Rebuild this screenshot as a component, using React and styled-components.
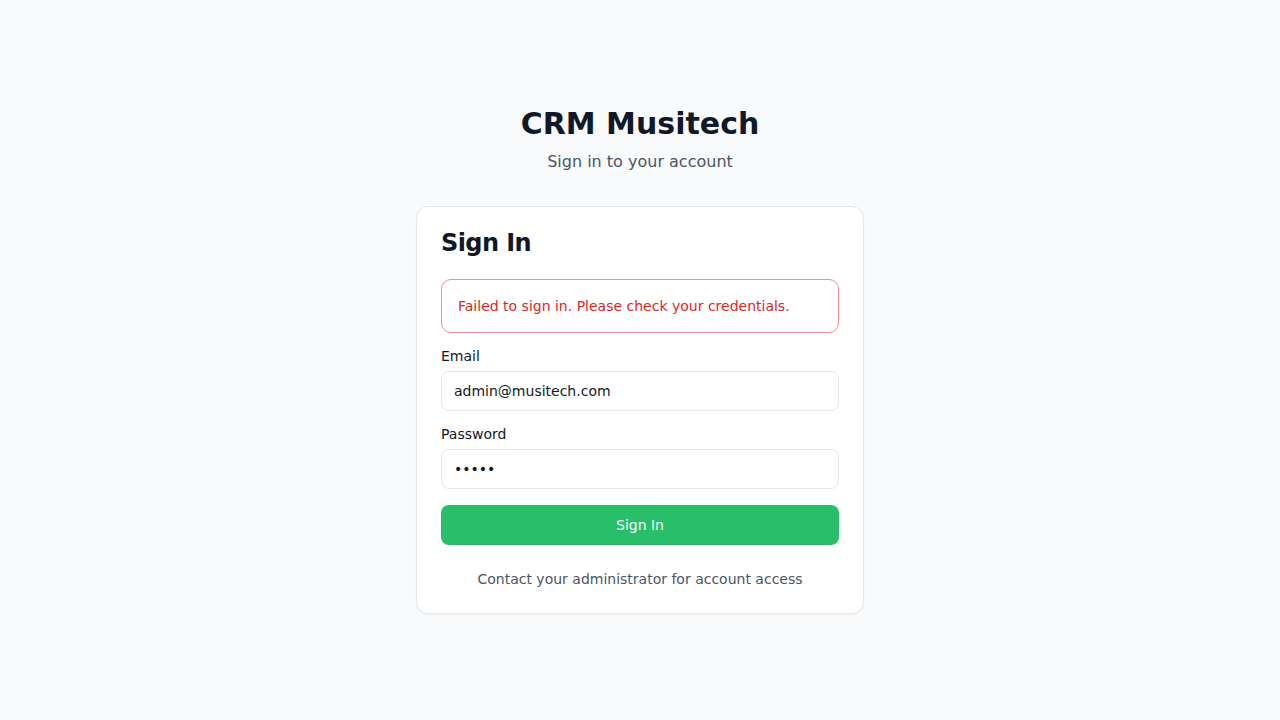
import styled, { createGlobalStyle } from "styled-components";

const GlobalStyle = createGlobalStyle`
  * {
    box-sizing: border-box;
  }
  body {
    margin: 0;
    background-color: #f9fafb;
    font-family: "DejaVu Sans", sans-serif;
    color: #111827;
  }
`;

const App = () => {
  return (
    <>
      <GlobalStyle />
      <Page>
        <Wrapper>
          <Header>
            <Title>CRM Musitech</Title>
            <Subtitle>Sign in to your account</Subtitle>
          </Header>
          <Card>
            <CardTitle>Sign In</CardTitle>
            <Form onSubmit={(e) => e.preventDefault()}>
              <ErrorBox>Failed to sign in. Please check your credentials.</ErrorBox>
              <Field>
                <Label htmlFor="email">Email</Label>
                <Input id="email" type="email" defaultValue="admin@musitech.com" />
              </Field>
              <Field>
                <Label htmlFor="password">Password</Label>
                <Input id="password" type="password" defaultValue="admin" />
              </Field>
              <Button type="submit">Sign In</Button>
            </Form>
            <Footer>Contact your administrator for account access</Footer>
          </Card>
        </Wrapper>
      </Page>
    </>
  );
};

export default App;

const Page = styled.div`
  min-height: 100vh;
  display: flex;
  align-items: center;
  justify-content: center;
`;

const Wrapper = styled.div`
  width: 448px;
`;

const Header = styled.div`
  text-align: center;
  margin-bottom: 32px;
`;

const Title = styled.h1`
  margin: 0;
  font-size: 30px;
  line-height: 36px;
  font-weight: 700;
  color: #111827;
`;

const Subtitle = styled.p`
  margin: 8px 0 0;
  font-size: 16px;
  line-height: 24px;
  color: #4b5563;
`;

const Card = styled.div`
  background-color: #ffffff;
  border: 1px solid #e2e8f0;
  border-radius: 12px;
  box-shadow: 0 1px 2px rgba(0, 0, 0, 0.05);
  padding: 24px;
`;

const CardTitle = styled.h2`
  margin: 0 0 24px;
  font-size: 24px;
  line-height: 1;
  font-weight: 700;
  letter-spacing: -0.025em;
  color: #111827;
`;

const Form = styled.form`
  display: flex;
  flex-direction: column;
  gap: 16px;
`;

const ErrorBox = styled.div`
  border: 1px solid #f28b8b;
  border-radius: 10px;
  padding: 16px;
  font-size: 14px;
  line-height: 20px;
  color: #dc2626;
  background-color: #ffffff;
`;

const Field = styled.div`
  display: flex;
  flex-direction: column;
  gap: 8px;
`;

const Label = styled.label`
  font-size: 14px;
  line-height: 1;
  font-weight: 500;
  color: #111827;
`;

const Input = styled.input`
  height: 40px;
  width: 100%;
  border: 1px solid #e2e8f0;
  border-radius: 8px;
  padding: 0 12px;
  font-family: "DejaVu Sans", sans-serif;
  font-size: 14px;
  color: #111827;
  background-color: #ffffff;
  outline: none;
`;

const Button = styled.button`
  height: 40px;
  width: 100%;
  border: none;
  border-radius: 8px;
  background-color: #29be69;
  color: #ffffff;
  font-family: "DejaVu Sans", sans-serif;
  font-size: 14px;
  font-weight: 500;
  cursor: pointer;
  &:hover {
    background-color: #22a95c;
  }
`;

const Footer = styled.p`
  margin: 24px 0 0;
  text-align: center;
  font-size: 14px;
  line-height: 20px;
  color: #4b5563;
`;
